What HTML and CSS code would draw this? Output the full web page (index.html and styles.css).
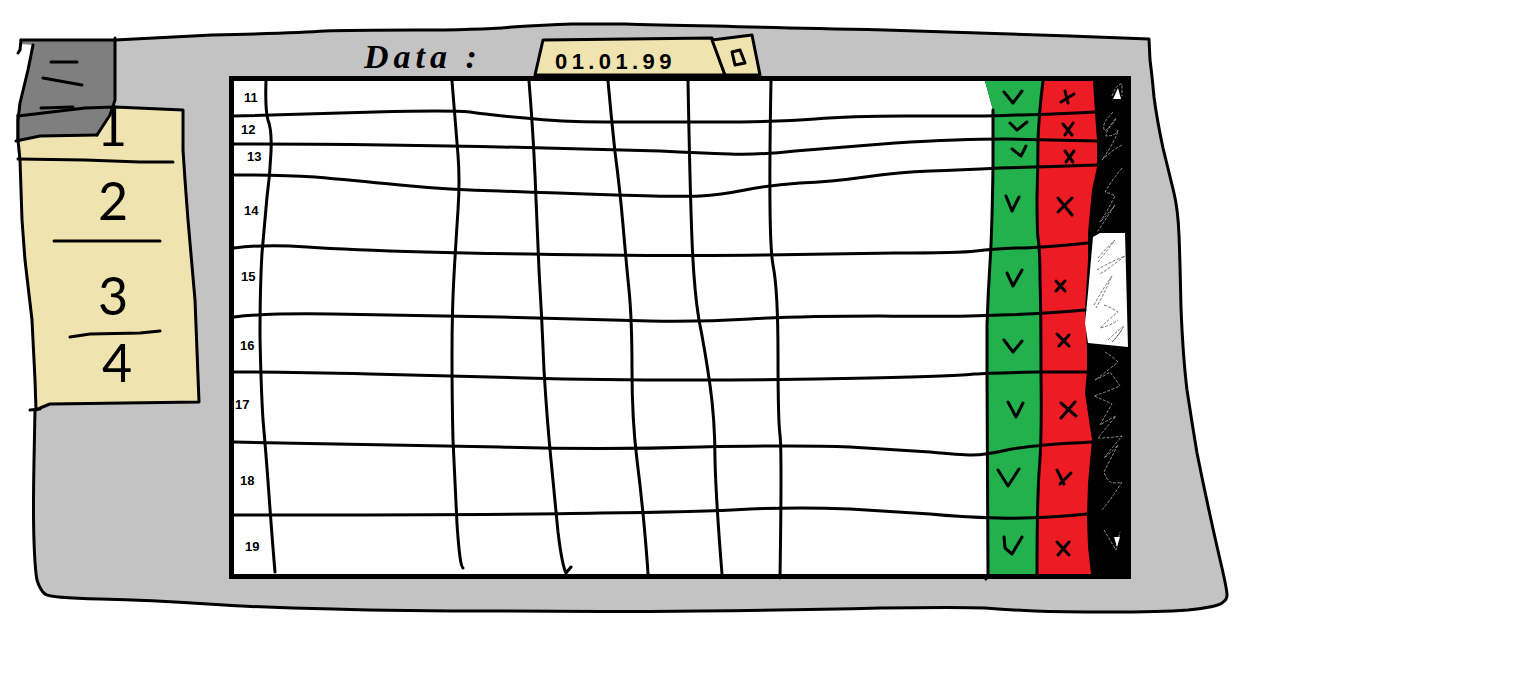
FILE: index.html
```html
<!DOCTYPE html>
<html lang="en">
<head>
<meta charset="utf-8">
<title>Sketch</title>
<link rel="stylesheet" href="styles.css">
</head>
<body>
<svg class="sketch" width="1517" height="677" viewBox="0 0 1517 677" xmlns="http://www.w3.org/2000/svg">
  <!-- window -->
  <path class="window" d="M33,44 L115,40 L212,35 Q300,33 325,31 Q350,30 415,30 Q480,30 512,27 Q545,25 572,24 Q600,24 625,24 Q650,25 715,26 Q780,28 885,30 Q990,33 1070,36 L1149,39 L1150,60 Q1152,75 1154,97 Q1157,120 1163,148 Q1170,177 1174,193 Q1178,210 1179,235 Q1180,260 1181,308 Q1183,357 1187,390 Q1192,423 1197,453 Q1203,483 1210,515 Q1217,547 1222,568 Q1227,590 1227,595 Q1227,600 1222,603 Q1217,607 1188,610 Q1160,612 1110,612 Q1060,612 1035,611 Q1010,610 985,608 Q960,607 880,608 Q800,610 700,611 Q600,612 500,611 Q400,611 333,609 Q267,608 208,604 Q150,600 100,599 Q50,598 45,594 Q40,590 37,580 Q35,570 34,541 Q33,513 34,461 L35,410 Z"/>

  <!-- left tabs -->
  <polygon class="paper line" points="115,107 183,110 183,150 185,180 188,220 195,300 199,402 50,404 40,408 36,410 35,380 32,320 25,260 22,220 20,160 18,140 18,115"/>
  <polyline class="line" points="30,410 40,409"/>
  <text class="tab-num" x="97" y="146">1</text>
  <polyline class="line" points="18,159 85,160 140,162 173,162"/>
  <text class="tab-num" x="98" y="220">2</text>
  <polyline class="line" points="54,241 160,241"/>
  <text class="tab-num" x="98" y="315">3</text>
  <polyline class="line" points="70,337 90,334 140,333 160,331"/>
  <text class="tab-num" x="102" y="382">4</text>

  <polygon class="dark" points="21,41 115,40 115,100 110,115 97,135 40,136 18,141 18,120 20,103 28,70 33,45 21,44"/>
  <polyline class="line" points="21,40 115,40"/>
  <polyline class="line" points="21,40 20,50 18,53"/>
  <polyline class="line" points="33,45 28,70 20,103 18,120 18,141"/>
  <polyline class="line" points="115,38 115,100 110,115 97,135"/>
  <polyline class="line" points="18,116 85,108 115,107"/>
  <polyline class="line" points="16,141 40,136 97,135"/>
  <polyline class="line" points="51,62 77,62"/>
  <polyline class="line" points="43,78 82,85"/>
  <polyline class="line" points="41,108 73,107"/>

  <!-- window outline -->
  <path class="line" d="M115,40 L212,35 Q300,33 325,31 Q350,30 415,30 Q480,30 512,27 Q545,25 572,24 Q600,24 625,24 Q650,25 715,26 Q780,28 885,30 Q990,33 1070,36 L1149,39 L1150,60 Q1152,75 1154,97 Q1157,120 1163,148 Q1170,177 1174,193 Q1178,210 1179,235 Q1180,260 1181,308 Q1183,357 1187,390 Q1192,423 1197,453 Q1203,483 1210,515 Q1217,547 1222,568 Q1227,590 1227,595 Q1227,600 1222,603 Q1217,607 1188,610 Q1160,612 1110,612 Q1060,612 1035,611 Q1010,610 985,608 Q960,607 880,608 Q800,610 700,611 Q600,612 500,611 Q400,611 333,609 Q267,608 208,604 Q150,600 100,599 Q50,598 45,594 Q40,590 37,580 Q35,570 34,541 Q33,513 34,461 L35,410"/>

  <!-- date -->
  <text class="date-label" x="364" y="68">Data :</text>
  <polygon class="paper line" points="543,40 712,38 725,75 535,75"/>
  <polygon class="paper line" points="712,40 752,35 760,75 725,75"/>
  <polygon class="line" points="732,52 740,50 745,63 735,65"/>
  <text class="date-value" x="555" y="69">01.01.99</text>

  <!-- table -->
  <rect class="frame" x="229" y="76" width="902" height="503"/>
  <polygon class="cell" points="234,81 985,81 993,110 993,167 992,233 988,293 987,360 988,574 234,574"/>
  <polygon class="yes" points="985,81 1043,81 1039,113 1038,167 1037,227 1040,250 1041,310 1042,440 1037,507 1037,574 988,574 988,373 987,360 988,293 992,233 993,167 993,110"/>
  <polygon class="no" points="1043,81 1093,81 1095,113 1097,140 1097,167 1092,190 1088,233 1088,260 1085,310 1087,350 1087,370 1085,393 1090,427 1092,440 1088,483 1087,517 1088,547 1091,574 1037,574 1037,507 1042,440 1041,310 1040,250 1037,227 1038,167 1039,113"/>
  <polygon class="thumb" points="1093,237 1100,233 1125,233 1128,347 1088,343 1085,323 1088,293"/>
  <polygon class="arrow" points="1118,88 1113,99 1121,99"/>
  <polygon class="arrow" points="1114,537 1120,537 1117,547"/>

  <g class="scribble">
    <path d="M1112,96 Q1116,84 1122,84 L1122,96"/>
    <path d="M1113,112 Q1100,125 1105,131 Q1114,124 1116,118 Q1106,130 1106,136 Q1116,136 1118,130 Q1116,140 1102,160 Q1112,150 1122,145"/>
    <path d="M1122,168 Q1112,180 1105,192 Q1112,194 1115,196 Q1108,210 1100,222 Q1108,214 1115,205 Q1104,222 1097,232"/>
    <path d="M1105,352 Q1112,356 1118,362 Q1106,372 1095,380 Q1104,376 1110,372 Q1116,380 1120,386 Q1106,392 1094,396 Q1104,400 1112,404 Q1106,414 1100,425 Q1108,420 1116,416 Q1106,428 1098,438 Q1110,438 1122,436 Q1112,448 1104,458 Q1112,452 1118,445 Q1110,460 1104,472 Q1106,478 1110,482 Q1116,484 1122,482 Q1112,498 1102,510"/>
    <path d="M1104,530 Q1110,540 1116,550 Q1118,540 1120,532"/>
  </g>
  <g class="scribble-thumb">
    <path d="M1098,258 Q1106,248 1115,240 Q1106,252 1098,262"/>
    <path d="M1097,270 Q1110,262 1125,256 Q1112,266 1100,274"/>
    <path d="M1094,305 Q1102,290 1112,276 Q1104,294 1096,308"/>
    <path d="M1104,305 Q1112,308 1118,312 Q1108,320 1100,328 Q1110,326 1118,320"/>
    <path d="M1108,340 Q1116,332 1124,326 Q1118,336 1112,342 Q1118,336 1122,330"/>
  </g>

  <g class="grid">
    <path d="M234,116 Q300,114 375,112 Q450,110 470,112 Q490,115 525,118 Q560,122 605,122 Q650,122 715,122 Q780,122 815,119 Q850,116 905,116 Q960,116 976,116 Q993,116 1016,115 Q1040,115 1095,112"/>
    <path d="M234,144 Q300,144 385,145 Q470,146 545,148 Q620,150 660,151 Q700,153 730,154 Q760,155 795,151 Q830,148 895,143 Q960,139 1005,139 Q1050,140 1097,141"/>
    <path d="M234,175 Q280,175 315,177 Q350,180 400,185 Q450,190 500,191 Q550,193 615,195 Q680,197 700,196 Q720,195 745,190 Q770,185 800,183 Q830,182 865,177 Q900,172 930,171 Q960,170 1000,168 Q1040,167 1097,165"/>
    <path d="M234,248 Q265,244 307,247 Q350,250 425,252 Q500,254 600,255 Q700,256 765,255 Q830,254 895,253 Q960,253 976,251 Q993,249 1016,248 Q1040,248 1087,243"/>
    <path d="M234,317 Q265,313 332,314 Q400,315 500,317 Q600,320 650,321 Q700,322 750,319 Q800,316 880,316 Q960,317 1000,315 Q1040,314 1085,310"/>
    <path d="M234,372 Q290,372 370,374 Q450,376 525,378 Q600,380 690,380 Q780,380 870,378 Q960,376 974,374 Q988,373 1037,372 L1087,372"/>
    <path d="M234,442 Q400,445 500,447 Q600,450 700,447 Q800,445 850,447 Q900,450 930,452 Q960,455 972,455 Q985,455 1007,450 Q1030,445 1092,442"/>
    <path d="M234,515 Q500,515 600,513 Q700,512 750,509 Q800,507 850,509 Q900,512 930,514 Q960,517 998,518 Q1037,519 1087,514"/>
    <path d="M266,80 Q265,110 268,120 Q272,130 271,152 Q270,175 267,197 Q265,220 262,253 Q260,287 260,337 Q261,387 263,420 Q266,453 269,495 Q272,537 275,572"/>
    <path d="M452,81 Q456,130 458,155 Q460,180 458,210 Q456,240 454,275 Q452,310 452,355 Q452,400 453,440 Q455,480 457,524 Q460,568 463,568"/>
    <path d="M529,81 Q533,130 535,175 Q537,220 539,270 Q542,320 544,370 Q547,420 551,460 Q555,500 558,532 Q562,565 566,573 L571,567"/>
    <path d="M608,81 Q611,115 615,152 Q620,190 623,225 Q626,260 629,290 Q632,320 632,370 Q632,420 637,460 Q642,500 645,535 Q648,570 648,575"/>
    <path d="M688,81 Q690,190 692,240 Q694,290 699,320 Q705,350 710,385 Q715,420 715,460 Q716,500 722,574"/>
    <path d="M771,81 Q768,240 773,265 Q778,290 778,355 Q778,420 780,435 Q782,450 780,578"/>
    <path d="M993,110 L993,167 Q992,233 990,263 Q988,293 987,326 Q987,360 987,373 L988,574 L986,579"/>
    <path d="M1043,81 Q1039,113 1038,140 Q1038,167 1037,197 Q1037,227 1038,238 Q1040,250 1040,280 Q1041,310 1041,375 Q1042,440 1039,473 Q1037,507 1037,574"/>
  </g>

  <g class="labels">
    <text x="244" y="102">11</text>
    <text x="241" y="134">12</text>
    <text x="247" y="161">13</text>
    <text x="244" y="215">14</text>
    <text x="241" y="281">15</text>
    <text x="240" y="350">16</text>
    <text x="235" y="409">17</text>
    <text x="240" y="485">18</text>
    <text x="245" y="551">19</text>
  </g>

  <g class="marks">
    <polyline points="1004,92 1013,103 1022,91"/>
    <polyline points="1010,123 1017,130 1027,122"/>
    <polyline points="1012,149 1021,156 1026,146"/>
    <polyline points="1006,196 1012,211 1019,197"/>
    <polyline points="1007,273 1013,286 1022,270"/>
    <polyline points="1004,340 1013,352 1022,341"/>
    <polyline points="1008,402 1016,417 1023,403"/>
    <polyline points="998,470 1008,486 1019,469"/>
    <polyline points="1004,537 1005,548 1012,554 1022,537"/>

    <path d="M1065,91 L1068,103 M1061,102 L1074,94"/>
    <path d="M1063,124 L1072,135 M1073,123 L1065,135"/>
    <path d="M1065,151 L1073,162 M1074,151 L1066,162"/>
    <path d="M1058,198 L1072,215 M1072,198 L1058,212"/>
    <path d="M1056,281 L1065,291 M1065,281 L1056,291"/>
    <path d="M1057,334 L1069,346 M1069,335 L1059,346"/>
    <path d="M1061,403 L1076,416 M1075,402 L1061,418"/>
    <path d="M1057,470 L1064,484 M1071,473 L1060,484"/>
    <path d="M1057,542 L1069,555 M1069,542 L1058,555"/>
  </g>
</svg>
</body>
</html>
```
FILE: styles.css
```css
html, body {
  margin: 0;
  background: #fff;
}

.sketch {
  display: block;
}

.window { fill: #c3c3c3; }

.line {
  fill: none;
  stroke: #000;
  stroke-width: 3;
  stroke-linejoin: round;
  stroke-linecap: round;
}

.paper { fill: #efe4b0; }
.dark { fill: #7f7f7f; }
.frame { fill: #000; }
.cell { fill: #fff; }
.yes { fill: #22b14c; }
.no { fill: #ed1c24; }
.thumb { fill: #fff; }
.arrow { fill: #fff; }

.grid path {
  fill: none;
  stroke: #000;
  stroke-width: 3;
  stroke-linejoin: round;
  stroke-linecap: round;
}

.marks polyline,
.marks path {
  fill: none;
  stroke: #000;
  stroke-width: 3;
  stroke-linejoin: round;
  stroke-linecap: round;
}

.scribble path {
  fill: none;
  stroke: #fff;
  stroke-width: 0.8;
  stroke-dasharray: 3 1.5;
  opacity: 0.7;
}

.scribble-thumb path {
  fill: none;
  stroke: #222;
  stroke-width: 0.8;
  stroke-dasharray: 3 1.5;
  opacity: 0.8;
}

.tab-num {
  font-family: "Lato", "Liberation Sans", sans-serif;
  font-weight: 400;
  font-size: 52px;
  fill: #000;
}

.date-label {
  font-family: "Liberation Serif", serif;
  font-style: italic;
  font-weight: 700;
  font-size: 34px;
  letter-spacing: 5px;
  fill: #000;
}

.date-value {
  font-family: "Liberation Sans", sans-serif;
  font-weight: 700;
  font-size: 22px;
  letter-spacing: 4.4px;
  fill: #000;
}

.labels text {
  font-family: "Liberation Sans", sans-serif;
  font-weight: 700;
  font-size: 13px;
  fill: #000;
}
```
